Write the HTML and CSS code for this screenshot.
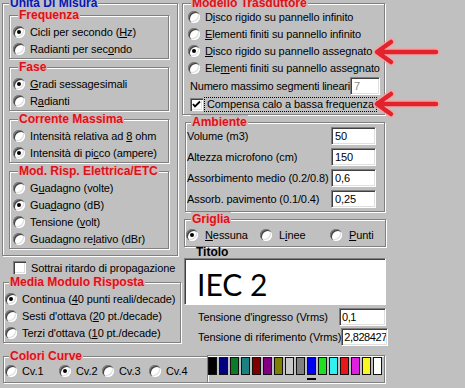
FILE: index.html
```html
<!DOCTYPE html>
<html lang="it">
<head>
<meta charset="UTF-8">
<title>Unità Di Misura</title>
<link rel="stylesheet" href="styles.css">
</head>
<body>
<div class="screen">
  <div class="top">
    <div class="col-left">
      <fieldset class="group units">
        <legend>Unità Di Misura</legend>
        <fieldset class="group sub">
          <legend>Frequenza</legend>
          <div class="opt"><span class="radio on"></span><span>Cicli per secondo (<u>H</u>z)</span></div>
          <div class="opt"><span class="radio"></span><span>Radianti per sec<u>o</u>ndo</span></div>
        </fieldset>
        <fieldset class="group sub">
          <legend>Fase</legend>
          <div class="opt"><span class="radio on"></span><span><u>G</u>radi sessagesimali</span></div>
          <div class="opt"><span class="radio"></span><span>R<u>a</u>dianti</span></div>
        </fieldset>
        <fieldset class="group sub">
          <legend>Corrente Massima</legend>
          <div class="opt"><span class="radio"></span><span>Intensità relativa ad <u>8</u> ohm</span></div>
          <div class="opt"><span class="radio on"></span><span>Intensità di pi<u>c</u>co (ampere)</span></div>
        </fieldset>
        <fieldset class="group sub">
          <legend>Mod. Risp. Elettrica/ETC</legend>
          <div class="opt"><span class="radio"></span><span>G<u>u</u>adagno (volte)</span></div>
          <div class="opt"><span class="radio on"></span><span>Gua<u>d</u>agno (dB)</span></div>
          <div class="opt"><span class="radio"></span><span>Tensione (<u>v</u>olt)</span></div>
          <div class="opt"><span class="radio"></span><span>Guadagno re<u>l</u>ativo (dBr)</span></div>
        </fieldset>
      </fieldset>
      <div class="opt delay"><span class="check"></span><span>Sottrai ritardo di propagazione</span></div>
      <fieldset class="group media">
        <legend>Media Modulo Risposta</legend>
        <div class="opt"><span class="radio on"></span><span>Continua (<u>4</u>0 punti reali/decade)</span></div>
        <div class="opt"><span class="radio"></span><span>Sesti d'ottava (<u>2</u>0 pt./decade)</span></div>
        <div class="opt"><span class="radio"></span><span>Terzi d'ottava (<u>1</u>0 pt./decade)</span></div>
      </fieldset>
    </div>

    <div class="col-right">
      <fieldset class="group model">
        <legend>Modello Trasduttore</legend>
        <div class="opt"><span class="radio"></span><span>D<u>i</u>sco rigido su pannello infinito</span></div>
        <div class="opt"><span class="radio"></span><span><u>E</u>lementi finiti su pannello infinito</span></div>
        <div class="opt"><span class="radio on"></span><span><u>D</u>isco rigido su pannello assegnato</span></div>
        <div class="opt"><span class="radio"></span><span>Ele<u>m</u>enti finiti su pannello assegnato</span></div>
        <div class="row segments"><span>Numero massimo segmenti lineari</span><input class="field off" type="text" value="7"></div>
        <div class="opt compensa">
          <span class="check">
            <svg width="13" height="13" viewBox="0 0 13 13"><path d="M3 6 L5 8.5 L10 3.5" fill="none" stroke="#000" stroke-width="1.8"/></svg>
          </span>
          <span class="focus">Compensa calo a bassa frequenza</span>
        </div>
      </fieldset>

      <fieldset class="group room">
        <legend>Ambiente</legend>
        <div class="row"><span>Volume (m3)</span><input class="field" type="text" value="50"></div>
        <div class="row"><span>Altezza microfono (cm)</span><input class="field" type="text" value="150"></div>
        <div class="row"><span>Assorbimento medio (0.2/0.8)</span><input class="field" type="text" value="0,6"></div>
        <div class="row"><span>Assorb. pavimento (0.1/0.4)</span><input class="field" type="text" value="0,25"></div>
      </fieldset>

      <fieldset class="group grid">
        <legend>Griglia</legend>
        <div class="choices">
          <div class="opt c-none"><span class="radio on"></span><span><u>N</u>essuna</span></div>
          <div class="opt c-lines"><span class="radio"></span><span>L<u>i</u>nee</span></div>
          <div class="opt"><span class="radio"></span><span><u>P</u>unti</span></div>
        </div>
      </fieldset>

      <div class="title-label">Titolo</div>
      <div class="title-box">IEC 2</div>
      <div class="row volt"><span>Tensione d'ingresso (Vrms)</span><input class="field" type="text" value="0,1"></div>
      <div class="row volt"><span>Tensione di riferimento (Vrms)</span><input class="field" type="text" value="2,828427"></div>
    </div>
  </div>

  <div class="bottom">
    <fieldset class="group curves">
      <legend>Colori Curve</legend>
      <div class="choices">
        <div class="opt cv1"><span class="radio"></span><span>Cv.1</span></div>
        <div class="opt cv2"><span class="radio on"></span><span>Cv.2</span></div>
        <div class="opt cv3"><span class="radio"></span><span>Cv.3</span></div>
        <div class="opt"><span class="radio"></span><span>Cv.4</span></div>
      </div>
    </fieldset>
    <div class="palette">
      <div class="swatch"><i class="k"></i></div>
      <div class="swatch"><i class="navy"></i></div>
      <div class="swatch"><i class="green"></i></div>
      <div class="swatch"><i class="teal"></i></div>
      <div class="swatch"><i class="maroon"></i></div>
      <div class="swatch"><i class="purple"></i></div>
      <div class="swatch"><i class="olive"></i></div>
      <div class="swatch"><i class="silver"></i></div>
      <div class="swatch"><i class="gray"></i></div>
      <div class="swatch sel"><i class="blue"></i></div>
      <div class="swatch"><i class="lime"></i></div>
      <div class="swatch"><i class="cyan"></i></div>
      <div class="swatch"><i class="red"></i></div>
      <div class="swatch"><i class="magenta"></i></div>
      <div class="swatch"><i class="yellow"></i></div>
      <div class="swatch"><i class="white"></i></div>
    </div>
  </div>

  <svg class="arrows" width="84" height="86" viewBox="0 0 84 86">
    <g class="glow">
      <path d="M68 16 H10 M23 6 L9 16 L23 26"/>
      <path d="M68 68 H10 M23 58 L9 68 L23 78"/>
    </g>
    <g class="stroke">
      <path d="M68 16 H10 M23 6 L9 16 L23 26"/>
      <path d="M68 68 H10 M23 58 L9 68 L23 78"/>
    </g>
  </svg>
</div>
</body>
</html>
```

FILE: styles.css
```css
* {
    box-sizing: border-box;
    margin: 0;
    padding: 0;
}
html, body {
    background: #c0c0c0;
}
body {
    font-family: "Liberation Sans", Arial, sans-serif;
    font-size: 11px;
    letter-spacing: -0.1px;
    color: #000;
    overflow: hidden;
}
.screen {
    position: relative;
    width: 465px;
    height: 388px;
    display: flow-root;
}
.top {
    display: flex;
    margin-top: -2px;
}
.col-left {
    width: 180px;
    padding-left: 2px;
}
.col-right {
    width: 206px;
}

/* etched group boxes */
.group {
    border: 1px solid #808080;
    box-shadow: inset 1px 1px 0 #fff, 1px 1px 0 #fff;
    min-width: 0;
}
.group > legend {
    font-size: 12px;
    font-weight: bold;
    line-height: 14px;
    letter-spacing: 0;
    color: #d2141e;
    background: #c0c0c0;
    padding: 0 1px;
    text-shadow: 0 0 2px #ff9c9c, 0 0 1px #ffb6b6;
}

/* controls */
.opt {
    display: flex;
    align-items: center;
    height: 17px;
    white-space: nowrap;
}
.row {
    display: flex;
    align-items: center;
    height: 21px;
    white-space: nowrap;
}
.radio {
    flex: none;
    display: flex;
    align-items: center;
    justify-content: center;
    width: 12px;
    height: 12px;
    margin-right: 5px;
    border-radius: 50%;
    background: #fff;
    box-shadow: inset 1px 1px 0 #808080, inset 2px 2px 0 #404040, inset -1px -1px 0 #fff, inset -2px -2px 0 #dfdfdf;
}
.radio.on::after {
    content: "";
    width: 4px;
    height: 4px;
    border-radius: 50%;
    background: #000;
}
.check {
    flex: none;
    display: block;
    width: 13px;
    height: 13px;
    background: #fff;
    box-shadow: inset 1px 1px 0 #808080, inset 2px 2px 0 #404040, inset -1px -1px 0 #fff, inset -2px -2px 0 #dfdfdf;
}
.check svg {
    display: block;
}
.field {
    height: 18px;
    margin-left: auto;
    padding: 0 2px 0 3px;
    font: inherit;
    letter-spacing: -0.1px;
    color: #000;
    background: #fff;
    border: 1px solid;
    border-color: #808080 #fff #fff #808080;
    box-shadow: inset 1px 1px 0 #404040, inset -1px -1px 0 #dfdfdf;
    outline: none;
}
.field.off {
    color: #8a8a8a;
}

/* left column */
.units {
    width: 176px;
    padding: 0 8px 6px 6px;
}
.units > legend,
.model > legend {
    line-height: 10px;
}
.units > legend {
    color: #0818a8;
    text-shadow: 0 0 2px #b8c0ff;
}
.sub {
    margin-top: 1px;
    padding: 1px 4px 1px 3px;
}
.sub:first-of-type {
    margin-top: 0;
}
.sub > legend {
    margin-left: 5px;
}
.delay {
    margin: 3px 0 0 11px;
}
.delay .check {
    margin-right: 5px;
}
.media {
    width: 178px;
    margin: -1px 0 0 1px;
    padding: 1px 2px 1px 1px;
}
.media > legend {
    margin-left: 4px;
}

/* right column */
.model {
    width: 203px;
    margin-left: 2px;
    padding: 0 4px 1px 5px;
}
.model > legend {
    margin-left: 3px;
}
.segments {
    height: 20px;
    padding-left: 2px;
    letter-spacing: -0.2px;
}
.segments .field {
    width: 30px;
}
.compensa .check {
    margin: 0 1px 0 2px;
}
.focus {
    padding: 0 2px;
    line-height: 13px;
    border: 1px dotted #000;
}
.room {
    width: 200px;
    margin-left: 5px;
    padding: 0 8px 2px 1px;
}
.room > legend {
    margin-left: 4px;
}
.room > legend + .row {
    margin-top: -4px;
}
.room .field {
    width: 45px;
}
.grid {
    width: 202px;
    margin-left: 4px;
    padding: 0 2px 3px 1px;
}
.grid > legend {
    margin-left: 5px;
}
.choices {
    display: flex;
}
.grid .radio {
    margin-right: 7px;
}
.c-none {
    width: 74px;
}
.c-lines {
    width: 70px;
}
.title-label {
    height: 11px;
    padding-left: 16px;
    font-size: 12px;
    font-weight: bold;
    line-height: 11px;
    letter-spacing: 0;
}
.title-box {
    width: 202px;
    height: 47px;
    margin-left: 4px;
    padding: 7px 0 0 12px;
    font-family: Lato, "Open Sans", sans-serif;
    font-size: 30px;
    line-height: 36px;
    letter-spacing: 0;
    background: #fff;
    border: 1px solid;
    border-color: #808080 #fff #fff #808080;
    box-shadow: inset 1px 1px 0 #404040;
}
.volt {
    height: 20px;
    padding-left: 18px;
}
.title-box + .volt {
    margin-top: 2px;
}
.volt .field {
    width: 47px;
    padding: 0 1px 0 2px;
    letter-spacing: -0.4px;
}

/* bottom strip */
.bottom {
    display: flex;
    margin-top: 2px;
}
.curves {
    width: 204px;
    margin-left: 3px;
    padding: 0 0 3px 1px;
    border-right: none;
}
.curves > legend {
    margin-left: 4px;
}
.curves .choices {
    margin-top: -1px;
}
.cv1 { width: 54px; }
.cv2 { width: 43px; }
.cv3 { width: 47px; }
.palette {
    display: flex;
    gap: 2px;
    width: 178px;
    margin-top: 6px;
    padding-top: 1px;
    border: 1px solid #808080;
    box-shadow: inset 1px 1px 0 #fff, 1px 1px 0 #fff;
}
.swatch {
    width: 9px;
}
.swatch i {
    display: block;
    height: 18px;
    border: 1px solid #111;
}
.swatch.sel::after {
    content: "";
    display: block;
    height: 2px;
    margin-top: 3px;
    background: #000;
}
.k { background: #000; }
.navy { background: #000080; }
.green { background: #0c7a28; }
.teal { background: #1a8080; }
.maroon { background: #800000; }
.purple { background: #800080; }
.olive { background: #808000; }
.silver { background: #c8c8c8; }
.gray { background: #808080; }
.blue { background: #0000f0; }
.lime { background: #20e020; }
.cyan { background: #30f0f0; }
.red { background: #e81818; }
.magenta { background: #e020e0; }
.yellow { background: #f8f820; }
.white { background: #fff; }

/* annotation arrows drawn over the dialog */
.arrows {
    position: absolute;
    left: 368px;
    top: 36px;
}
.arrows path {
    fill: none;
    stroke-linecap: round;
    stroke-linejoin: round;
}
.arrows .glow path {
    stroke: #f6a2a2;
    stroke-width: 8;
    opacity: 0.75;
}
.arrows .stroke path {
    stroke: #e2222c;
    stroke-width: 4.5;
}
```
